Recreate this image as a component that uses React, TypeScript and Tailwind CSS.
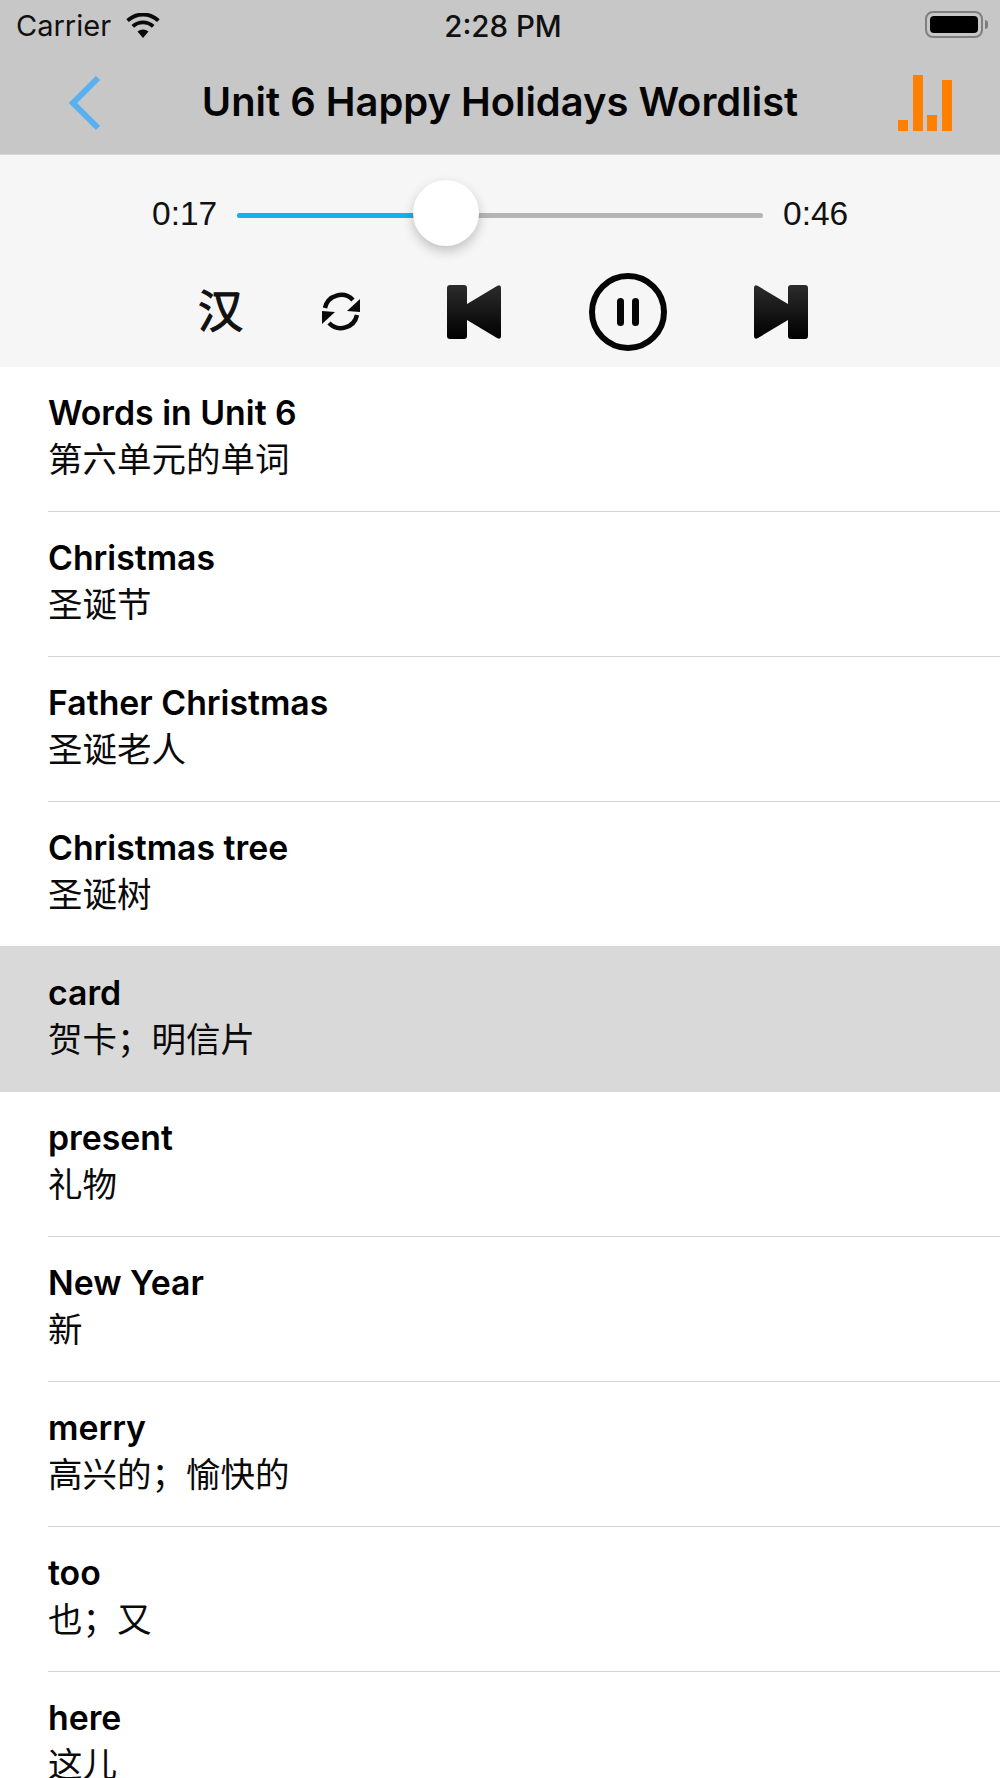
const words: [string, string][] = [
  ["Words in Unit 6", "第六单元的单词"],
  ["Christmas", "圣诞节"],
  ["Father Christmas", "圣诞老人"],
  ["Christmas tree", "圣诞树"],
  ["card", "贺卡；明信片"],
  ["present", "礼物"],
  ["New Year", "新"],
  ["merry", "高兴的；愉快的"],
  ["too", "也；又"],
  ["here", "这儿"],
];

const cjk = { fontFamily: '"Noto Sans CJK SC", sans-serif' };

function Row({ en, zh, active, last }: { en: string; zh: string; active: boolean; last: boolean }) {
  return (
    <div className={active ? "bg-[#d9d9d9] -mt-px pt-px" : "bg-white"}>
      <div className="ml-12 h-[145px] border-b border-[#d4d4d4] pt-[23px] box-border" style={active || last ? { borderColor: "transparent" } : undefined}>
        <div className="h-[46px] text-[33.8px] leading-[46px] font-semibold text-black font-['Inter',sans-serif]">{en}</div>
        <div className="h-[46px] -mt-[2px] text-[34.5px] leading-[46px] text-[#0a0a0a]" style={cjk}>{zh}</div>
      </div>
    </div>
  );
}

export default function App() {
  return (
    <div className="w-[1000px] h-[1778px] overflow-hidden bg-white font-['Inter',sans-serif]">
      <header className="h-[155px] bg-[#c7c7c7] border-b border-[#d6d6d6] box-border">
        <div className="h-[51px] flex items-center justify-between pl-4 pr-3 relative">
          <div className="flex items-center gap-[15px]">
            <span className="text-[29px] leading-[52px] text-[#111]">Carrier</span>
            <svg width="34" height="25" viewBox="0 0 34 25">
              <path d="M17 25 L11.5 18.6 A8.5 8.5 0 0 1 22.5 18.6 Z" fill="#0a0a0a" />
              <path d="M6.8 13.4 A15 15 0 0 1 27.2 13.4" fill="none" stroke="#0a0a0a" strokeWidth="3.8" />
              <path d="M1.6 7.6 A22.5 22.5 0 0 1 32.4 7.6" fill="none" stroke="#0a0a0a" strokeWidth="3.8" />
            </svg>
          </div>
          <span className="absolute left-0 right-0 pl-[6px] text-center text-[29.5px] leading-[52px] font-medium text-[#111]">2:28 PM</span>
          <div className="flex items-center gap-[2px] -mt-[2px] -ml-[1px]">
            <div className="w-[58px] h-[27px] rounded-[8px] border-2 border-[#7f7f7f] p-[3px] box-border">
              <div className="w-full h-full rounded-[4px] bg-black" />
            </div>
            <div className="w-[3px] h-[9px] rounded-r-full bg-[#7f7f7f]" />
          </div>
        </div>
        <div className="h-[101px] flex items-center justify-between pl-[68px] pr-12">
          <svg width="34" height="56" viewBox="0 0 34 56" className="mt-[3px]">
            <path d="M30 3 L5 28 L30 53" fill="none" stroke="#58b1ee" strokeWidth="6" />
          </svg>
          <h1 className="mt-[1px] text-[39.9px] leading-none font-semibold text-[#050505] whitespace-nowrap">Unit 6 Happy Holidays Wordlist</h1>
          <svg width="54" height="56" viewBox="0 0 54 56" className="mt-[3px]">
            <rect x="0" y="45" width="10" height="11" fill="#ff8000" />
            <rect x="15" y="0" width="10" height="56" fill="#ff8000" />
            <rect x="29" y="40" width="10" height="16" fill="#ff8000" />
            <rect x="44" y="5" width="10" height="51" fill="#ff8000" />
          </svg>
        </div>
      </header>

      <section className="h-[212px] bg-[#f6f6f6] box-border pt-[35px]">
        <div className="flex items-center h-[50px] pl-[152px]">
          <span className="w-[85px] mb-[3px] text-[33.5px] leading-none text-[#111] font-['Liberation_Sans',sans-serif]">0:17</span>
          <div className="relative w-[526px] h-[5px] rounded-full bg-[#b5b5b5]">
            <div className="h-full w-[200px] rounded-full bg-[#1aaef0]" />
            <div className="absolute left-[176px] top-[-33px] w-[66px] h-[66px] rounded-full bg-white shadow-[0_5px_12px_rgba(0,0,0,0.22)]" />
          </div>
          <span className="ml-[20px] mb-[3px] text-[33.5px] leading-none text-[#111] font-['Liberation_Sans',sans-serif]">0:46</span>
        </div>
        <div className="flex items-center h-[80px] mt-[32px] pl-[198px]">
          <span className="w-[123px] mb-[8px] text-[45px] leading-none text-[#111] [-webkit-text-stroke:1.2px_#111]" style={cjk}>汉</span>
          <svg width="40" height="40" viewBox="0 0 40 40" className="mr-[86px]">
            <path d="M4 16 A16.5 16.5 0 0 1 32 8" fill="none" stroke="#0a0a0a" strokeWidth="4.5" />
            <path d="M39 7 L39 20 L26 19 Z" fill="#0a0a0a" />
            <path d="M36 23 A16.5 16.5 0 0 1 8 31" fill="none" stroke="#0a0a0a" strokeWidth="4.5" />
            <path d="M1 32 L1 19 L14 20 Z" fill="#0a0a0a" />
          </svg>
          <svg width="54" height="54" viewBox="0 0 54 54" className="mr-[88px]">
            <defs>
              <linearGradient id="pg" x1="0" y1="0" x2="0" y2="1">
                <stop offset="0" stopColor="#2c2c2c" />
                <stop offset="1" stopColor="#000" />
              </linearGradient>
            </defs>
            <path d="M3 0 H17 Q20 0 20 3 V19 L50 1 Q54 -1 54 3 V51 Q54 55 50 53 L20 35 V51 Q20 54 17 54 H3 Q0 54 0 51 V3 Q0 0 3 0 Z" fill="url(#pg)" />
          </svg>
          <svg width="78" height="78" viewBox="0 0 78 78" className="mr-[87px]">
            <circle cx="39" cy="39" r="36" fill="none" stroke="#050505" strokeWidth="6" />
            <rect x="28" y="25" width="7" height="28" rx="3.5" fill="#050505" />
            <rect x="43" y="25" width="7" height="28" rx="3.5" fill="#050505" />
          </svg>
          <svg width="54" height="54" viewBox="0 0 54 54">
            <path d="M51 0 H37 Q34 0 34 3 V19 L4 1 Q0 -1 0 3 V51 Q0 55 4 53 L34 35 V51 Q34 54 37 54 H51 Q54 54 54 51 V3 Q54 0 51 0 Z" fill="url(#pg)" />
          </svg>
        </div>
      </section>

      <main>
        {words.map(([en, zh], i) => (
          <Row key={en} en={en} zh={zh} active={i === 4} last={i === 3} />
        ))}
      </main>
    </div>
  );
}
